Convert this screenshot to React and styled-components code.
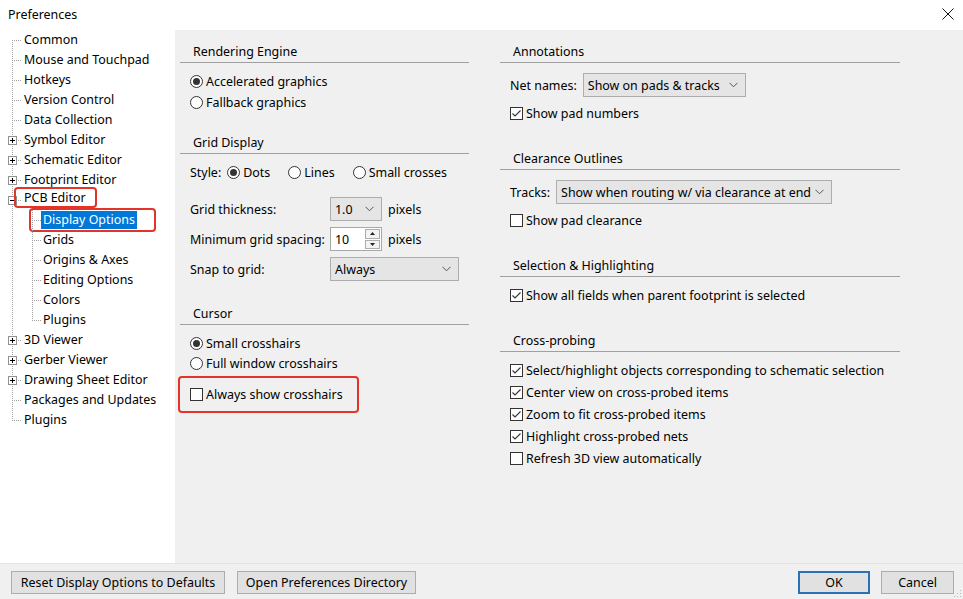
import React from "react";
import styled, {createGlobalStyle} from "styled-components";

const GlobalStyle = createGlobalStyle`
  html, body {
    margin: 0;
    padding: 0;
    background: #f0f0f0;
  }
  body {
    font-family: "Noto Sans", "Open Sans", sans-serif;
    font-size: 12.45px;
    color: #000;
  }
`;

const Window = styled.div`
    width: 963px;
    height: 599px;
    display: flex;
    flex-direction: column;
    background: #f0f0f0;
    overflow: hidden;
`;

const TitleBar = styled.div`
    flex: none;
    height: 30px;
    background: #fff;
    display: flex;
    align-items: center;
    justify-content: space-between;
    padding: 0 9px 2px 8px;
    box-sizing: border-box;
`;

const Body = styled.div`
    flex: 1;
    display: flex;
    min-height: 0;
`;

const TreePane = styled.div`
    flex: none;
    width: 175px;
    background: #fff;
    display: flex;
    flex-direction: column;
`;

const SettingsPane = styled.div`
    flex: 1;
    display: flex;
    gap: 31px;
    padding-left: 5px;
`;

const Footer = styled.div`
    flex: none;
    height: 36px;
    box-sizing: border-box;
    border-top: 1px solid #e4e4e4;
    display: flex;
    align-items: flex-start;
    padding: 7px 0 0 11px;
`;

const Spacer = styled.div`
    flex: 1;
`;

const Button = styled.button`
    width: ${p => p.$w}px;
    height: 23px;
    margin-right: ${p => p.$mr || 0}px;
    box-sizing: border-box;
    border: ${p => p.$primary ? "2px solid #2a72b5" : "1px solid #adadad"};
    background: #e1e1e1;
    font-family: inherit;
    font-size: 12.45px;
    color: #000;
    padding: 0;
`;

const Grip = styled.svg`
    align-self: flex-end;
    flex: none;
`;

/* ---------- tree ---------- */

const vdots = (x, y, h) =>
  `repeating-linear-gradient(to bottom, #a0a0a0 0 1px, transparent 1px 2px) ${x}px ${y}px / 1px ${h}px no-repeat`;
const hdots = (x, y, w) =>
  `repeating-linear-gradient(to right, #a0a0a0 0 1px, transparent 1px 2px) ${x}px ${y}px / ${w}px 1px no-repeat`;
const vRange = {first: [10, 10], mid: [0, 20], last: [0, 11], pass: [0, 20]};

const TreeRow = styled.div`
    flex: none;
    height: 20px;
    display: flex;
    align-items: center;
    white-space: nowrap;
`;

const Gutter = styled.span`
    flex: none;
    width: ${p => p.$w}px;
    height: 20px;
    box-sizing: border-box;
    display: flex;
    align-items: center;
    padding-left: ${p => p.$x - 4}px;
    background: ${p => {
      const [y, h] = vRange[p.$vert];
      const layers = [];
      if (p.$branch) layers.push(hdots(p.$x, 10, p.$w - p.$x));
      layers.push(vdots(p.$x, y, h));
      return layers.join(", ");
    }};
`;

const NodeLabel = styled.span`
    padding: 0 2px;
    line-height: 18px;
    background: ${p => p.$sel ? "#0078d7" : "transparent"};
    color: ${p => p.$sel ? "#fff" : "#000"};
`;

const Callout = styled.span`
    display: inline-flex;
    align-items: center;
    align-self: flex-start;
    box-sizing: border-box;
    height: ${p => p.$h}px;
    margin-top: ${p => p.$top}px;
    padding: 0 ${p => p.$r}px 0 ${p => p.$l}px;
    margin-left: -${p => p.$l}px;
    margin-right: -${p => p.$r}px;
    box-shadow: inset 0 0 0 2px #e3342b;
    border-radius: 4px;
`;

const Expander = ({open}) => (
  <svg width="9" height="9" viewBox="0 0 9 9">
    <rect x="0.5" y="0.5" width="8" height="8" fill="#fff" stroke="#919191"/>
    <path d="M2 4.5h5" stroke="#000"/>
    {!open && <path d="M4.5 2v5" stroke="#000"/>}
  </svg>
);

const treeItems = [
  {label: "Common", vert: "first"},
  {label: "Mouse and Touchpad"},
  {label: "Hotkeys"},
  {label: "Version Control"},
  {label: "Data Collection"},
  {label: "Symbol Editor", exp: "closed"},
  {label: "Schematic Editor", exp: "closed"},
  {label: "Footprint Editor", exp: "closed"},
  {label: "PCB Editor", exp: "open", callout: {l: 8, r: 9, h: 21, top: -3}},
  {label: "Display Options", child: true, sel: true, callout: {l: 12, r: 19, h: 24, top: -2}},
  {label: "Grids", child: true},
  {label: "Origins & Axes", child: true},
  {label: "Editing Options", child: true},
  {label: "Colors", child: true},
  {label: "Plugins", child: true, last: true},
  {label: "3D Viewer", exp: "closed"},
  {label: "Gerber Viewer", exp: "closed"},
  {label: "Drawing Sheet Editor", exp: "closed"},
  {label: "Packages and Updates"},
  {label: "Plugins", vert: "last"},
];

const TreeNode = ({item}) => {
  const label = <NodeLabel $sel={item.sel}>{item.label}</NodeLabel>;
  return (
    <TreeRow>
      <Gutter $w={22} $x={12} $vert={item.child ? "pass" : (item.vert || "mid")} $branch={!item.child}>
        {item.exp && <Expander open={item.exp === "open"}/>}
      </Gutter>
      {item.child && <Gutter $w={19} $x={10} $vert={item.last ? "last" : "mid"} $branch/>}
      {item.callout
        ? <Callout $l={item.callout.l} $r={item.callout.r} $h={item.callout.h} $top={item.callout.top}>{label}</Callout>
        : label}
    </TreeRow>
  );
};

/* ---------- settings ---------- */

const Column = styled.div`
    flex: none;
    width: ${p => p.$w}px;
    display: flex;
    flex-direction: column;
    padding-top: 12px;
`;

const SectionTitle = styled.div`
    margin-top: ${p => p.$mt || 0}px;
    height: 20px;
    line-height: 19px;
    padding-left: 13px;
    border-bottom: 1px solid #a0a0a0;
`;

const OptionRow = styled.div`
    display: flex;
    align-items: center;
    height: ${p => p.$h || 20}px;
    margin-top: ${p => p.$mt || 0}px;
    padding-left: 10px;
    white-space: nowrap;
`;

const OptionItem = styled.span`
    display: inline-flex;
    align-items: center;
    gap: 3px;
    margin-left: ${p => p.$ml || 0}px;
`;

const FieldLabel = styled.span`
    flex: none;
    width: ${p => p.$w ? `${p.$w}px` : "auto"};
    margin-right: ${p => p.$mr || 0}px;
`;

const Unit = styled.span`
    margin-left: 6px;
`;

const RadioCircle = styled.span`
    flex: none;
    width: 13px;
    height: 13px;
    box-sizing: border-box;
    border: 1px solid #333;
    border-radius: 50%;
    background: #fff;
    display: inline-flex;
    align-items: center;
    justify-content: center;

    &::after {
        content: "";
        width: 7px;
        height: 7px;
        border-radius: 50%;
        background: ${p => p.$on ? "#333" : "transparent"};
    }
`;

const CheckBox = styled.span`
    flex: none;
    width: 13px;
    height: 13px;
    box-sizing: border-box;
    border: 1px solid #333;
    background: #fff;
    display: inline-flex;
`;

const HighlightBox = styled.div`
    display: flex;
    align-items: center;
    align-self: flex-start;
    margin-top: ${p => p.$mt}px;
    padding: 8px 14px 8px 10px;
    border: 2px solid #e3342b;
    border-radius: 4px;
    margin-left: -2px;
    white-space: nowrap;
`;

const ComboBox = styled.div`
    flex: none;
    width: ${p => p.$w}px;
    height: 24px;
    box-sizing: border-box;
    border: 1px solid #adadad;
    background: #e5e5e5;
    display: flex;
    align-items: center;
    justify-content: space-between;
    padding: 0 7px 0 4px;
    white-space: nowrap;
    overflow: hidden;
`;

const SpinBox = styled.div`
    flex: none;
    width: 52px;
    height: 24px;
    box-sizing: border-box;
    border: 1px solid #a8a8a8;
    background: #fff;
    display: flex;
    align-items: center;
    justify-content: space-between;
    padding: 1px 1px 1px 4px;
`;

const SpinButtons = styled.div`
    align-self: stretch;
    width: 15px;
    display: flex;
    flex-direction: column;
    gap: 1px;
`;

const SpinButton = styled.div`
    flex: 1;
    border: 1px solid #adadad;
    background: #f3f3f3;
    display: flex;
    align-items: center;
    justify-content: center;
`;

const Radio = ({on, children, ml}) => (
  <OptionItem $ml={ml}><RadioCircle $on={on}/>{children}</OptionItem>
);

const Check = ({on, children}) => (
  <OptionItem>
    <CheckBox>
      {on && (
        <svg width="11" height="11" viewBox="0 0 11 11">
          <path d="M1.5 5.5 L4 8 L9.5 2.5" fill="none" stroke="#333" strokeWidth="1.1"/>
        </svg>
      )}
    </CheckBox>
    {children}
  </OptionItem>
);

const Chevron = () => (
  <svg width="9" height="6" viewBox="0 0 9 6">
    <path d="M0.5 0.8 L4.5 4.8 L8.5 0.8" fill="none" stroke="#555" strokeWidth="1"/>
  </svg>
);

const Combo = ({w, value}) => (
  <ComboBox $w={w}><span>{value}</span><Chevron/></ComboBox>
);

const Spin = ({value}) => (
  <SpinBox>
    <span>{value}</span>
    <SpinButtons>
      <SpinButton><svg width="5" height="3" viewBox="0 0 5 3"><path d="M0 3 L2.5 0 L5 3Z" fill="#222"/></svg></SpinButton>
      <SpinButton><svg width="5" height="3" viewBox="0 0 5 3"><path d="M0 0 L2.5 3 L5 0Z" fill="#222"/></svg></SpinButton>
    </SpinButtons>
  </SpinBox>
);

const crossProbe = [
  ["Select/highlight objects corresponding to schematic selection", true],
  ["Center view on cross-probed items", true],
  ["Zoom to fit cross-probed items", true],
  ["Highlight cross-probed nets", true],
  ["Refresh 3D view automatically", false],
];

const App = () => (
  <Window>
    <GlobalStyle/>
    <TitleBar>
      <span>Preferences</span>
      <svg width="12" height="12" viewBox="0 0 12 12">
        <path d="M0.5 0.5 L11.5 11.5 M11.5 0.5 L0.5 11.5" stroke="#111" strokeWidth="1"/>
      </svg>
    </TitleBar>
    <Body>
      <TreePane>
        {treeItems.map((item, i) => <TreeNode key={i} item={item}/>)}
      </TreePane>
      <SettingsPane>
        <Column $w={289}>
          <SectionTitle>Rendering Engine</SectionTitle>
          <OptionRow $h={21} $mt={8}><Radio on>Accelerated graphics</Radio></OptionRow>
          <OptionRow $h={21}><Radio>Fallback graphics</Radio></OptionRow>

          <SectionTitle $mt={20}>Grid Display</SectionTitle>
          <OptionRow $h={21} $mt={8}>
            <FieldLabel $mr={6}>Style:</FieldLabel>
            <Radio on>Dots</Radio>
            <Radio ml={18}>Lines</Radio>
            <Radio ml={18}>Small crosses</Radio>
          </OptionRow>
          <OptionRow $h={24} $mt={14}>
            <FieldLabel $w={140}>Grid thickness:</FieldLabel>
            <Combo w={52} value="1.0"/>
            <Unit>pixels</Unit>
          </OptionRow>
          <OptionRow $h={24} $mt={6}>
            <FieldLabel $w={140}>Minimum grid spacing:</FieldLabel>
            <Spin value="10"/>
            <Unit>pixels</Unit>
          </OptionRow>
          <OptionRow $h={24} $mt={6}>
            <FieldLabel $w={140}>Snap to grid:</FieldLabel>
            <Combo w={129} value="Always"/>
          </OptionRow>

          <SectionTitle $mt={23}>Cursor</SectionTitle>
          <OptionRow $h={20} $mt={8}><Radio on>Small crosshairs</Radio></OptionRow>
          <OptionRow $h={20}><Radio>Full window crosshairs</Radio></OptionRow>
          <HighlightBox $mt={3}><Check>Always show crosshairs</Check></HighlightBox>
        </Column>

        <Column $w={400}>
          <SectionTitle>Annotations</SectionTitle>
          <OptionRow $h={24} $mt={10}>
            <FieldLabel $mr={6}>Net names:</FieldLabel>
            <Combo w={163} value="Show on pads & tracks"/>
          </OptionRow>
          <OptionRow $mt={6}><Check on>Show pad numbers</Check></OptionRow>

          <SectionTitle $mt={26}>Clearance Outlines</SectionTitle>
          <OptionRow $h={24} $mt={10}>
            <FieldLabel $mr={6}>Tracks:</FieldLabel>
            <Combo w={276} value="Show when routing w/ via clearance at end"/>
          </OptionRow>
          <OptionRow $mt={6}><Check>Show pad clearance</Check></OptionRow>

          <SectionTitle $mt={26}>Selection &amp; Highlighting</SectionTitle>
          <OptionRow $mt={8}><Check on>Show all fields when parent footprint is selected</Check></OptionRow>

          <SectionTitle $mt={26}>Cross-probing</SectionTitle>
          {crossProbe.map(([text, on], i) => (
            <OptionRow key={i} $h={22} $mt={i === 0 ? 7 : 0}><Check on={on}>{text}</Check></OptionRow>
          ))}
        </Column>
      </SettingsPane>
    </Body>
    <Footer>
      <Button $w={214} $mr={12}>Reset Display Options to Defaults</Button>
      <Button $w={179}>Open Preferences Directory</Button>
      <Spacer/>
      <Button $w={72} $mr={11} $primary>OK</Button>
      <Button $w={73}>Cancel</Button>
      <Grip width="9" height="9" viewBox="0 0 9 9">
        <rect x="6" y="6" width="1" height="1" fill="#bbb"/>
        <rect x="6" y="3" width="1" height="1" fill="#bbb"/>
        <rect x="3" y="6" width="1" height="1" fill="#bbb"/>
        <rect x="6" y="0" width="1" height="1" fill="#bbb"/>
        <rect x="3" y="3" width="1" height="1" fill="#bbb"/>
        <rect x="0" y="6" width="1" height="1" fill="#bbb"/>
      </Grip>
    </Footer>
  </Window>
);

export default App;
